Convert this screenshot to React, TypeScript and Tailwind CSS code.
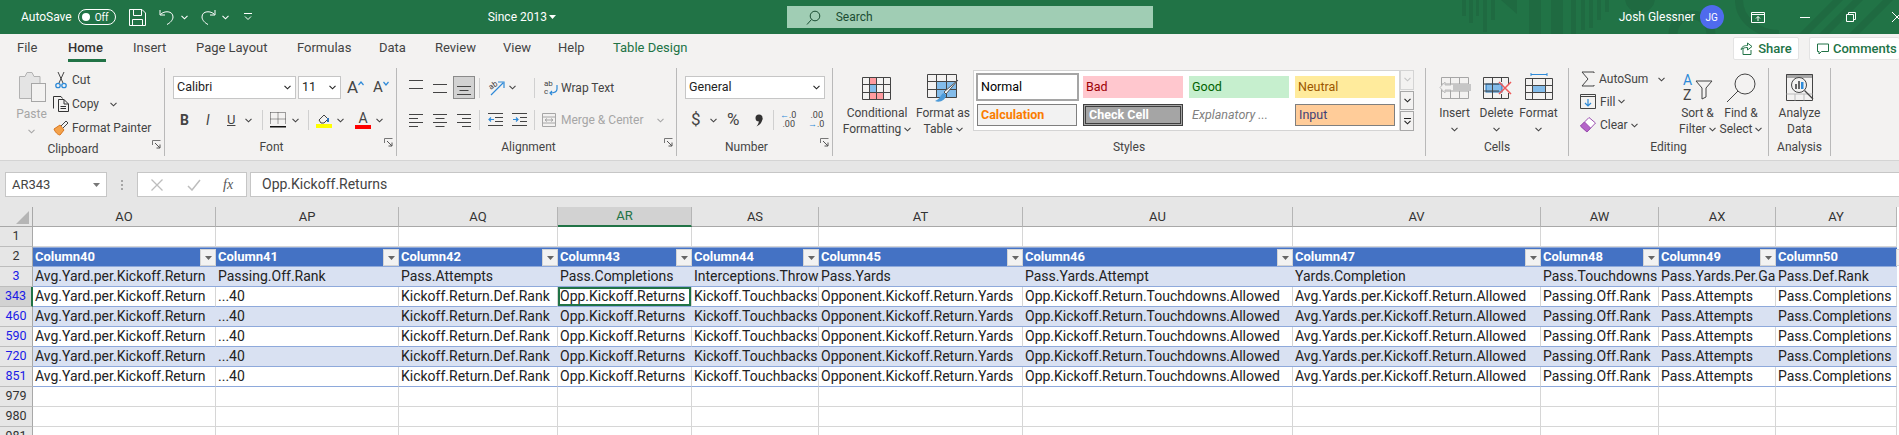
import type { ReactNode } from 'react';

const cols = [
  { id: 'AO', w: 183, head: 'Column40', first: 'Avg.Yard.per.Kickoff.Return', cell: 'Avg.Yard.per.Kickoff.Return' },
  { id: 'AP', w: 183, head: 'Column41', first: 'Passing.Off.Rank', cell: '...40' },
  { id: 'AQ', w: 159, head: 'Column42', first: 'Pass.Attempts', cell: 'Kickoff.Return.Def.Rank' },
  { id: 'AR', w: 134, head: 'Column43', first: 'Pass.Completions', cell: 'Opp.Kickoff.Returns' },
  { id: 'AS', w: 127, head: 'Column44', first: 'Interceptions.Thrown', cell: 'Kickoff.Touchbacks' },
  { id: 'AT', w: 204, head: 'Column45', first: 'Pass.Yards', cell: 'Opponent.Kickoff.Return.Yards' },
  { id: 'AU', w: 270, head: 'Column46', first: 'Pass.Yards.Attempt', cell: 'Opp.Kickoff.Return.Touchdowns.Allowed' },
  { id: 'AV', w: 248, head: 'Column47', first: 'Yards.Completion', cell: 'Avg.Yards.per.Kickoff.Return.Allowed' },
  { id: 'AW', w: 118, head: 'Column48', first: 'Pass.Touchdowns', cell: 'Passing.Off.Rank' },
  { id: 'AX', w: 117, head: 'Column49', first: 'Pass.Yards.Per.Game', cell: 'Pass.Attempts' },
  { id: 'AY', w: 121, head: 'Column50', first: 'Pass.Def.Rank', cell: 'Pass.Completions' },
];

const tabs = [
  { name: 'File', w: 51 },
  { name: 'Home', w: 65 },
  { name: 'Insert', w: 63 },
  { name: 'Page Layout', w: 101 },
  { name: 'Formulas', w: 82 },
  { name: 'Data', w: 56 },
  { name: 'Review', w: 68 },
  { name: 'View', w: 55 },
  { name: 'Help', w: 55 },
  { name: 'Table Design', w: 90 },
];

function Chev({ color = '#444' }: { color?: string }) {
  return (
    <svg width="7" height="5" viewBox="0 0 7 5" className="shrink-0">
      <path d="M0.5 0.8 L3.5 3.8 L6.5 0.8" fill="none" stroke={color} strokeWidth="1.1" />
    </svg>
  );
}

function Launcher() {
  return (
    <svg width="9" height="9" viewBox="0 0 9 9" className="shrink-0">
      <path d="M0.5 5V0.5H8.5" fill="none" stroke="#777" />
      <path d="M3 3L8 8M8 4.5V8H4.5" fill="none" stroke="#555" />
    </svg>
  );
}

function Lines({ widths, aligned, start = 2, step = 4 }: { widths: number[]; aligned: 'l' | 'c' | 'r'; start?: number; step?: number }) {
  return (
    <svg width="16" height="16" viewBox="0 0 16 16" className="shrink-0">
      {widths.map((w, i) => {
        const x = aligned === 'l' ? 1 : aligned === 'r' ? 15 - w : 8 - w / 2;
        return <rect key={i} x={x} y={start + i * step} width={w} height="1" fill="#444" />;
      })}
    </svg>
  );
}

function Group({ w, label, launcher, pr = 0, children }: { w: number; label: string; launcher?: boolean; pr?: number; children: ReactNode }) {
  return (
    <div className="shrink-0 h-[88px] flex flex-col border-r border-[#b9b9b9]" style={{ width: w }}>
      <div className="h-[80px] flex">{children}</div>
      <div className="flex-1 flex items-center relative text-[12px] text-[#444]" style={{ paddingRight: pr }}>
        <div className="flex-1 text-center">{label}</div>
        {launcher && (
          <div className="absolute right-[3px] top-0">
            <Launcher />
          </div>
        )}
      </div>
    </div>
  );
}

function BigButton({ w, ml = 0, lines, icon, chevLine = true }: { w: number; ml?: number; lines: string[]; icon: ReactNode; chevLine?: boolean }) {
  return (
    <div className="flex flex-col items-center shrink-0 text-[12px] text-[#444]" style={{ width: w, marginLeft: ml }}>
      <div className="h-[35px] flex items-center justify-center mt-[2px]">{icon}</div>
      <div className="leading-[16px] whitespace-nowrap">{lines[0]}</div>
      <div className="leading-[16px] flex items-center gap-[3px] whitespace-nowrap h-[16px]">
        {lines[1]}
        {chevLine && <Chev />}
      </div>
    </div>
  );
}

function GridIcon({ children }: { children?: ReactNode }) {
  return (
    <svg width="38" height="28" viewBox="0 0 38 28">
      {children}
      <path d="M4.5 3.5H32.5V25.5H4.5Z M4.5 10.5H32.5 M4.5 18.5H32.5 M11.5 3.5V25.5 M18.5 3.5V25.5 M25.5 3.5V25.5" fill="none" stroke="#444" />
    </svg>
  );
}

function SelectBox({ w, text, ml = 0 }: { w: number; text: string; ml?: number }) {
  return (
    <div className="h-[23px] bg-white border border-[#c6c6c6] flex items-center justify-between pl-[3px] pr-[4px] text-[12.5px] text-[#222] shrink-0" style={{ width: w, marginLeft: ml }}>
      <span>{text}</span>
      <Chev color="#222" />
    </div>
  );
}

function StyleCell({ text, className }: { text: string; className: string }) {
  return <div className={`h-[22px] w-[100px] flex items-center px-[3px] text-[12.5px] whitespace-nowrap shrink-0 ${className}`}>{text}</div>;
}

function TitleBar() {
  return (
    <div className="relative isolate h-[34px] bg-[#217346] flex items-center text-white text-[12px] overflow-hidden [&>*]:shrink-0">
      <svg width="460" height="34" viewBox="0 0 460 34" className="absolute right-0 top-0 -z-10">
        <g fill="#1f6a41">
          <rect x="23" y="0" width="4" height="16" />
          <rect x="30" y="0" width="4" height="23" />
          <rect x="37" y="0" width="3" height="16" />
          <rect x="44" y="0" width="4" height="32" />
          <rect x="52" y="0" width="4" height="20" />
          <path d="M62 0H78V14Z" />
          <rect x="90" y="0" width="12" height="34" />
          <rect x="112" y="0" width="12" height="34" />
          <rect x="132" y="0" width="5" height="34" />
          <rect x="142" y="0" width="4" height="30" />
          <rect x="150" y="0" width="4" height="28" />
          <rect x="158" y="0" width="4" height="20" />
          <rect x="166" y="0" width="4" height="12" />
          <circle cx="201" cy="-2" r="15" />
          <path d="M360 34L394 0H404L370 34Z M380 34L414 0H424L390 34Z M410 34L444 0H454L420 34Z" />
        </g>
        <circle cx="253" cy="34" r="19" fill="none" stroke="#1f6a41" strokeWidth="9" />
        <path d="M300 0C300 20 320 34 340 34" fill="none" stroke="#1f6a41" strokeWidth="8" />
      </svg>
      <span className="ml-[21px]">AutoSave</span>
      <div className="ml-[6px] w-[38px] h-[16px] rounded-full border border-white flex items-center pl-[3px] gap-[5px] text-[10px]">
        <span className="w-[8px] h-[8px] rounded-full bg-white" />
        Off
      </div>
      <svg width="17" height="17" viewBox="0 0 17 17" className="ml-[13px]">
        <path d="M0.5 0.5H13L16.5 4V16.5H0.5Z M4.5 0.5V6.5H12.5V0.5 M3.5 16.5V10.5H13.5V16.5" fill="none" stroke="#fff" />
      </svg>
      <svg width="16" height="16" viewBox="0 0 16 16" className="ml-[13px]">
        <path d="M1 1V6H6 M1.5 5.5C5 1.5 14 1.5 14 8C14 11 11 14 8 15.5" fill="none" stroke="#fff" />
      </svg>
      <div className="ml-[6px]"><Chev color="#fff" /></div>
      <svg width="16" height="16" viewBox="0 0 16 16" className="ml-[12px]">
        <path d="M15 1V6H10 M14.5 5.5C11 1.5 2 1.5 2 8C2 11 5 14 8 15.5" fill="none" stroke="#fff" />
      </svg>
      <div className="ml-[6px]"><Chev color="#fff" /></div>
      <svg width="8" height="8" viewBox="0 0 8 8" className="ml-[15px]">
        <path d="M0 0.5H8 M1 3.5L4 6.5L7 3.5" fill="none" stroke="#fff" />
      </svg>
      <span className="ml-[236px] w-[55px] whitespace-nowrap">Since 2013</span>
      <svg width="7" height="4" viewBox="0 0 7 4" className="ml-[6px]">
        <path d="M0 0H7L3.5 4Z" fill="#fff" />
      </svg>
      <div className="ml-[231px] w-[366px] h-[22px] bg-[#a0cdb4] flex items-center text-[#1b4d33]">
        <svg width="15" height="15" viewBox="0 0 15 15" className="ml-[19px]">
          <circle cx="9" cy="6" r="4.8" fill="none" stroke="#1b4d33" />
          <path d="M5.5 9.5L1 14.5" stroke="#1b4d33" />
        </svg>
        <span className="ml-[15px]">Search</span>
      </div>
      <span className="ml-[466px] w-[72px] whitespace-nowrap">Josh Glessner</span>
      <div className="ml-[9px] w-[24px] h-[24px] rounded-full bg-[#4f6bed] flex items-center justify-center text-[10px]">JG</div>
      <svg width="14" height="11" viewBox="0 0 14 11" className="ml-[27px]">
        <path d="M0.5 0.5H13.5V10.5H0.5Z M0.5 2.5H13.5 M7 9V4.5 M5 6.5L7 4.5L9 6.5" fill="none" stroke="#fff" />
      </svg>
      <div className="ml-[35px] w-[10px] h-px bg-white" />
      <svg width="10" height="10" viewBox="0 0 10 10" className="ml-[36px]">
        <path d="M0.5 2.5H7.5V9.5H0.5Z M2.5 2.5V0.5H9.5V7.5H7.5" fill="none" stroke="#fff" />
      </svg>
      <svg width="10" height="10" viewBox="0 0 10 10" className="ml-[36px]">
        <path d="M0 0L10 10M10 0L0 10" stroke="#fff" />
      </svg>
    </div>
  );
}

function TabRow() {
  return (
    <div className="h-[28px] flex items-center pl-[17px] text-[13px] text-[#444] relative">
      {tabs.map((t) => (
        <div
          key={t.name}
          className={`shrink-0 h-[28px] flex items-center whitespace-nowrap relative ${t.name === 'Table Design' ? 'text-[#217346]' : ''} ${t.name === 'Home' ? 'font-medium text-[#333]' : ''}`}
          style={{ width: t.w }}
        >
          {t.name}
          {t.name === 'Home' && <div className="absolute left-0 bottom-0 w-[38px] h-[3px] bg-[#217346]" />}
        </div>
      ))}
      <div className="ml-auto flex gap-[10px] text-[#217346] text-[13px] font-medium mt-[1px]">
        <div className="w-[66px] h-[23px] bg-white border border-[#e3e3e3] rounded-[2px] flex items-center justify-center gap-[5px]">
          <svg width="13" height="13" viewBox="0 0 13 13">
            <path d="M3 6V12.5H11V8 M1 7.5C2 4 5 3.5 7.5 3.5V1L12 4.5L7.5 8V5.5C5 5.5 3 6 1 7.5Z" fill="none" stroke="#217346" />
          </svg>
          Share
        </div>
        <div className="w-[90px] h-[23px] bg-white border border-[#e3e3e3] border-r-0 rounded-[2px] flex items-center pl-[7px] gap-[4px] overflow-hidden">
          <svg width="12" height="12" viewBox="0 0 12 12" className="shrink-0">
            <path d="M0.5 1H11.5V8.5H4.5L2 11V8.5H0.5Z" fill="none" stroke="#217346" />
          </svg>
          Comments
        </div>
      </div>
    </div>
  );
}

function Ribbon() {
  return (
    <div className="h-[99px] bg-[#f3f2f1] border-b border-[#d4d4d4] pt-[6px] flex">
      {/* Clipboard */}
      <Group w={165} label="Clipboard" launcher pr={18}>
        <div className="ml-[17px] w-[29px] flex flex-col items-center text-[12px] text-[#a6a6a6]">
          <svg width="28" height="31" viewBox="0 0 28 31" className="mt-[3px]">
            <path d="M1.5 5.5H7L9 1.5H14L16 5.5H22V27.5H1.5Z" fill="#e4e4e4" stroke="#b2b2b2" />
            <rect x="13.5" y="12.5" width="14" height="18" fill="#f3f2f1" stroke="#a6a6a6" />
          </svg>
          <span className="mt-[3px]">Paste</span>
          <div className="mt-[6px]"><Chev color="#a6a6a6" /></div>
        </div>
        <div className="ml-[7px] flex flex-col text-[12px] text-[#444]">
          <div className="h-[24px] flex items-center gap-[3px]">
            <svg width="16" height="18" viewBox="0 0 16 18">
              <path d="M5 1L10 12M11 1L6 12" stroke="#444" fill="none" />
              <circle cx="5" cy="14.5" r="2.2" fill="none" stroke="#2e8ad8" strokeWidth="1.3" />
              <circle cx="11" cy="14.5" r="2.2" fill="none" stroke="#2e8ad8" strokeWidth="1.3" />
            </svg>
            Cut
          </div>
          <div className="h-[24px] flex items-center gap-[3px]">
            <svg width="16" height="16" viewBox="0 0 16 16">
              <path d="M0.5 12.5V0.5H8L9.5 2.5 M5.5 3.5H11L15.5 8V15.5H5.5Z M11 3.5V8H15.5 M7.5 10.5H13 M7.5 12.5H13" fill="none" stroke="#333" />
            </svg>
            <span>Copy</span>
            <div className="ml-[8px]"><Chev /></div>
          </div>
          <div className="h-[24px] flex items-center gap-[3px] whitespace-nowrap">
            <svg width="16" height="16" viewBox="0 0 16 16">
              <path d="M1 9L7 5L11 10L7 15C5 15 2 12 1 9Z" fill="#f4a24b" stroke="#d9761d" />
              <path d="M8 6L13 1L15 3L10 8" fill="none" stroke="#444" />
            </svg>
            Format Painter
          </div>
        </div>
      </Group>
      {/* Font */}
      <Group w={232} label="Font" launcher pr={18}>
        <div className="pl-[8px] flex flex-col">
          <div className="mt-[8px] flex items-center">
            <SelectBox w={123} text="Calibri" />
            <SelectBox w={43} ml={2} text="11" />
            <span className="ml-[6px] text-[17px] leading-none text-[#444]">A</span>
            <svg width="6" height="5" viewBox="0 0 6 5" className="mb-[8px]">
              <path d="M0.5 4L3 1L5.5 4" fill="none" stroke="#2e8ad8" strokeWidth="1.2" />
            </svg>
            <span className="ml-[9px] text-[15px] leading-none text-[#444]">A</span>
            <svg width="6" height="5" viewBox="0 0 6 5" className="mb-[8px]">
              <path d="M0.5 1L3 4L5.5 1" fill="none" stroke="#2e8ad8" strokeWidth="1.2" />
            </svg>
          </div>
          <div className="mt-[9px] h-[24px] flex items-center text-[#444]">
            <span className="ml-[7px] w-[26px] font-bold text-[14px]">B</span>
            <span className="w-[21px] italic text-[14px]">I</span>
            <span className="w-[18px] underline text-[13px]">U</span>
            <Chev />
            <div className="ml-[10px] w-px h-[20px] bg-[#d0d0d0]" />
            <svg width="16" height="16" viewBox="0 0 16 16" className="ml-[7px]">
              <path d="M0.5 0.5H15.5V12 M0.5 0.5V12 M8 0.5V12 M0.5 7H15.5" fill="none" stroke="#444" strokeDasharray="1 1" />
              <rect x="0" y="14" width="16" height="1.5" fill="#111" />
            </svg>
            <div className="ml-[6px]"><Chev /></div>
            <div className="ml-[9px] w-px h-[20px] bg-[#d0d0d0]" />
            <svg width="16" height="16" viewBox="0 0 16 16" className="ml-[7px]">
              <path d="M3 8L8 3L12 7L8 11H5Z" fill="none" stroke="#444" />
              <path d="M12 6V10" stroke="#2e72b8" strokeWidth="2" />
              <rect x="0" y="12" width="16" height="4" fill="#ffff00" />
            </svg>
            <div className="ml-[5px]"><Chev /></div>
            <div className="ml-[11px] w-[16px] h-[18px] flex flex-col items-center text-[14px] leading-[14px] text-[#444]">
              A
              <div className="w-[16px] h-[4px] bg-[#ff0000]" />
            </div>
            <div className="ml-[5px]"><Chev /></div>
          </div>
        </div>
      </Group>
      {/* Alignment */}
      <Group w={280} label="Alignment" launcher pr={16}>
        <div className="pl-[11px] flex flex-col">
          <div className="mt-[8px] flex items-center h-[23px]">
            <div className="w-[24px] h-[16px]"><Lines widths={[14, 14]} aligned="c" start={0} step={8} /></div>
            <div className="w-[21px] h-[16px]"><Lines widths={[14, 14]} aligned="c" start={4} step={8} /></div>
            <div className="w-[22px] h-[23px] bg-[#d2d2d2] border border-[#8a8a8a] flex items-center justify-center">
              <Lines widths={[14, 9, 14]} aligned="c" start={6} step={4} />
            </div>
            <div className="ml-[4px] w-px h-[20px] bg-[#d0d0d0]" />
            <svg width="18" height="16" viewBox="0 0 18 16" className="ml-[8px]">
              <text x="1" y="8" fontSize="8" fill="#444" fontFamily="Roboto" transform="rotate(-35 5 6)">ab</text>
              <path d="M3 15L15 3M10 2H16V8" fill="none" stroke="#2e8ad8" strokeWidth="1.2" />
            </svg>
            <div className="ml-[3px]"><Chev /></div>
            <div className="ml-[18px] w-px h-[20px] bg-[#d0d0d0] -mr-px" />
            <div className="ml-[9px] flex items-center gap-[2px] text-[12px] text-[#444]">
              <svg width="16" height="17" viewBox="0 0 16 17">
                <text x="1" y="7" fontSize="8" fill="#444" fontFamily="Roboto">ab</text>
                <text x="1" y="15" fontSize="8" fill="#444" fontFamily="Roboto">c</text>
                <path d="M14 6V10C14 13 11 14 7 14M9 12L7 14L9 16" fill="none" stroke="#2e8ad8" strokeWidth="1.2" />
              </svg>
              <span className="whitespace-nowrap">Wrap Text</span>
            </div>
          </div>
          <div className="mt-[9px] h-[24px] flex items-center">
            <div className="w-[24px] h-[16px]"><Lines widths={[14, 9, 14, 9]} aligned="l" /></div>
            <div className="w-[24px] h-[16px]"><Lines widths={[14, 9, 14, 9]} aligned="c" /></div>
            <div className="w-[16px] h-[16px]"><Lines widths={[14, 9, 14, 9]} aligned="r" /></div>
            <div className="ml-[7px] w-px h-[20px] bg-[#d0d0d0]" />
            <svg width="15" height="14" viewBox="0 0 15 14" className="ml-[8px]">
              <path d="M0 0.5H15 M7 4.5H15 M7 8.5H15 M0 12.5H15" stroke="#444" />
              <path d="M6 6.5H1M3 4.5L1 6.5L3 8.5" fill="none" stroke="#2e8ad8" strokeWidth="1.2" />
            </svg>
            <svg width="15" height="14" viewBox="0 0 15 14" className="ml-[9px]">
              <path d="M0 0.5H15 M8 4.5H15 M8 8.5H15 M0 12.5H15" stroke="#444" />
              <path d="M1 6.5H6M4 4.5L6 6.5L4 8.5" fill="none" stroke="#2e8ad8" strokeWidth="1.2" />
            </svg>
            <div className="ml-[7px] w-px h-[20px] bg-[#d0d0d0]" />
            <div className="ml-[7px] flex items-center gap-[5px] text-[12px] text-[#a6a6a6] whitespace-nowrap">
              <svg width="14" height="14" viewBox="0 0 14 14">
                <path d="M0.5 0.5H13.5V13.5H0.5Z M0.5 4H13.5 M0.5 10H13.5 M3 7H11M5 5.5L3 7L5 8.5M9 5.5L11 7L9 8.5" fill="none" stroke="#a6a6a6" />
              </svg>
              Merge &amp; Center
              <div className="ml-[9px]"><Chev color="#a6a6a6" /></div>
            </div>
          </div>
        </div>
      </Group>
      {/* Number */}
      <Group w={156} label="Number" launcher pr={16}>
        <div className="pl-[8px] flex flex-col">
          <div className="mt-[8px]"><SelectBox w={140} text="General" /></div>
          <div className="mt-[9px] h-[24px] flex items-center text-[#444]">
            <span className="ml-[6px] w-[14px] text-[17px]">$</span>
            <div className="ml-[5px]"><Chev /></div>
            <span className="ml-[10px] w-[20px] text-[17px]">%</span>
            <svg width="8" height="13" viewBox="0 0 8 13" className="ml-[8px] mr-[2px]">
              <circle cx="4" cy="4" r="3.5" fill="#333" />
              <path d="M7.5 4C7.5 8 5 11 1.5 12.5C3.5 10 4 8 4 6Z" fill="#333" />
            </svg>
            <div className="ml-[8px] w-px h-[20px] bg-[#d0d0d0]" />
            <div className="ml-[6px] w-[15px] text-[9px] leading-[9px] text-right">
              <span className="text-[#2e8ad8]">←</span>.0<br />.00
            </div>
            <div className="ml-[13px] w-[15px] text-[9px] leading-[9px] text-right">
              .00<br /><span className="text-[#2e8ad8]">→</span>.0
            </div>
          </div>
        </div>
      </Group>
      {/* Styles */}
      <Group w={593} label="Styles">
        <BigButton
          w={70}
          ml={9}
          lines={['Conditional', 'Formatting']}
          icon={
            <GridIcon>
              <path d="M11.5 3.5H18.5V10.5H11.5Z M11.5 18.5H25.5V25.5H11.5Z" fill="#ff9b9f" stroke="#d92b2b" />
              <rect x="11.5" y="10.5" width="7" height="8" fill="#83bcea" />
            </GridIcon>
          }
        />
        <BigButton
          w={54}
          ml={4}
          lines={['Format as', 'Table']}
          icon={
            <svg width="34" height="30" viewBox="0 0 34 30">
              <rect x="11" y="9" width="20" height="16" fill="#83bcea" />
              <path d="M1.5 1.5H30.5V24.5H1.5Z M1.5 8.5H30.5 M1.5 16.5H30.5 M10.5 1.5V24.5 M20.5 1.5V24.5" fill="none" stroke="#444" />
              <path d="M32 7L20 21L18 19Z" fill="#fff" stroke="#555" />
              <path d="M18 20C14 21 15 26 9 28C14 30 20 27 20 22Z" fill="#4c9ad8" />
            </svg>
          }
        />
        <div className="ml-[3px] mt-[2px] w-[427px] h-[61px] bg-white border border-[#d4d4d4] p-[2px] pr-0 flex flex-col gap-[3px]">
          <div className="flex items-start gap-[4px]">
            <div className="w-[103px] h-[28px] border-2 border-[#a5a5a5] bg-white flex items-center pl-[3px] text-[12.5px] text-black shrink-0">Normal</div>
            <div className="flex gap-[6px] mt-[3px]">
              <StyleCell text="Bad" className="bg-[#ffc7ce] text-[#9c0006]" />
              <StyleCell text="Good" className="bg-[#c6efce] text-[#006100]" />
              <StyleCell text="Neutral" className="bg-[#ffeb9c] text-[#9c5700]" />
            </div>
          </div>
          <div className="flex gap-[6px] ml-[1px]">
            <StyleCell text="Calculation" className="bg-[#f2f2f2] border border-[#7f7f7f] text-[#fa7d00] font-bold" />
            <StyleCell text="Check Cell" className="bg-[#a5a5a5] border-[3px] border-double border-[#3f3f3f] text-white font-bold" />
            <StyleCell text="Explanatory ..." className="italic text-[#7f7f7f]" />
            <StyleCell text="Input" className="bg-[#ffcc99] border border-[#7f7f7f] text-[#3f3f76]" />
          </div>
        </div>
        <div className="mt-[2px] w-[14px] h-[61px] flex flex-col gap-px">
          <div className="flex-1 border border-[#d4d4d4] bg-[#f3f2f1] flex items-center justify-center"><Chev color="#c4c4c4" /></div>
          <div className="flex-1 border border-[#a8a8a8] bg-[#f3f2f1] flex items-center justify-center"><Chev color="#222" /></div>
          <div className="flex-1 border border-[#a8a8a8] bg-[#f3f2f1] flex flex-col items-center justify-center gap-px">
            <div className="w-[7px] h-px bg-[#222]" />
            <Chev color="#222" />
          </div>
        </div>
      </Group>
      {/* Cells */}
      <Group w={143} label="Cells">
        <div className="ml-[7px] flex">
          <BigButton
            w={43}
            lines={['Insert', '']}
            icon={
              <svg width="32" height="24" viewBox="0 0 32 24">
                <path d="M2.5 1.5H29.5V22.5H2.5Z M2.5 8H29.5 M2.5 15H29.5 M11.5 1.5V22.5 M20.5 1.5V22.5" fill="none" stroke="#a6a6a6" />
                <rect x="14" y="8" width="18" height="7" fill="#c6c6c6" />
                <path d="M12 9H6V6L1 11.5L6 17V14H12" fill="#f3f2f1" stroke="#bdbdbd" />
              </svg>
            }
          />
          <BigButton
            w={41}
            lines={['Delete', '']}
            icon={
              <svg width="32" height="24" viewBox="0 0 32 24">
                <rect x="5" y="8" width="16" height="8" fill="#83bcea" stroke="#1c6eb4" />
                <path d="M2.5 1.5H27.5V8 M2.5 1.5V22.5H27.5V17 M2.5 8H18 M2.5 15H18 M11.5 1.5V22.5 M20.5 1.5V6 M20.5 18V22.5" fill="none" stroke="#444" />
                <path d="M18 6L30 18M30 6L18 18" stroke="#ee5a5a" strokeWidth="1.5" />
              </svg>
            }
          />
          <BigButton
            w={43}
            lines={['Format', '']}
            icon={
              <svg width="30" height="29" viewBox="0 0 30 29">
                <path d="M7 1.5H23 M7 0V3 M23 0V3" stroke="#2e8ad8" />
                <rect x="8.5" y="12.5" width="13" height="7" fill="#83bcea" stroke="#1c6eb4" />
                <path d="M1.5 5.5H28.5V26.5H1.5Z M1.5 12.5H28.5 M1.5 19.5H28.5 M8.5 5.5V26.5 M21.5 5.5V26.5" fill="none" stroke="#444" />
              </svg>
            }
          />
        </div>
      </Group>
      {/* Editing */}
      <Group w={200} label="Editing">
        <div className="ml-[11px] w-[96px] flex flex-col text-[12px] text-[#444]">
          <div className="h-[22px] flex items-center">
            <svg width="16" height="16" viewBox="0 0 16 16">
              <path d="M14 2V1H2L8 8L2 15H14V14" fill="none" stroke="#444" />
            </svg>
            <span className="ml-[3px]">AutoSum</span>
            <div className="ml-[10px]"><Chev /></div>
          </div>
          <div className="h-[23px] flex items-center">
            <svg width="16" height="15" viewBox="0 0 16 15">
              <path d="M0.5 0.5H15.5V14.5H0.5Z M0.5 2.5H15.5" fill="none" stroke="#444" />
              <path d="M8 5V12M5 9L8 12L11 9" fill="none" stroke="#2e8ad8" strokeWidth="1.2" />
            </svg>
            <span className="ml-[4px]">Fill</span>
            <div className="ml-[3px]"><Chev /></div>
          </div>
          <div className="h-[24px] flex items-center">
            <svg width="16" height="16" viewBox="0 0 16 16">
              <path d="M0.5 9L9 0.5L15.5 6L7 15Z" fill="#fff" stroke="#9b4fb0" />
              <path d="M0.5 9L4.5 5L10.5 11L7 15Z" fill="#b565c9" stroke="#9b4fb0" />
            </svg>
            <span className="ml-[4px]">Clear</span>
            <div className="ml-[3px]"><Chev /></div>
          </div>
        </div>
        <BigButton
          w={43}
          lines={['Sort &', 'Filter']}
          icon={
            <svg width="30" height="28" viewBox="0 0 30 28" className="-mt-[2px]">
              <text x="0" y="12" fontSize="14" fill="#2e8ad8" fontFamily="Roboto">A</text>
              <text x="0" y="27" fontSize="14" fill="#444" fontFamily="Roboto">Z</text>
              <path d="M13 8H29L23 15V24L19 26V15Z" fill="none" stroke="#444" />
            </svg>
          }
        />
        <BigButton
          w={44}
          lines={['Find &', 'Select']}
          icon={
            <svg width="30" height="30" viewBox="0 0 30 30">
              <circle cx="19" cy="11" r="10" fill="none" stroke="#444" />
              <path d="M12 18L1 29" stroke="#444" />
            </svg>
          }
        />
      </Group>
      {/* Analysis */}
      <Group w={62} label="Analysis">
        <BigButton
          w={61}
          lines={['Analyze', 'Data']}
          chevLine={false}
          icon={
            <svg width="30" height="30" viewBox="0 0 30 30">
              <rect x="1" y="1" width="27" height="4" fill="#a6a6a6" />
              <path d="M1.5 1.5H27.5V27.5H1.5Z" fill="none" stroke="#444" />
              <path d="M1.5 21H27.5 M10 21V27.5 M19 21V27.5" stroke="#bbb" />
              <circle cx="14" cy="12" r="7.5" fill="#f3f2f1" stroke="#444" />
              <rect x="10" y="11" width="2" height="5" fill="#666" />
              <rect x="13" y="8" width="2" height="8" fill="#666" />
              <rect x="16" y="9" width="2.5" height="7" fill="#2e8ad8" />
              <path d="M19.5 17.5L28 26" stroke="#444" strokeWidth="1.3" />
            </svg>
          }
        />
      </Group>
    </div>
  );
}

function FormulaBar() {
  return (
    <div className="h-[46px] bg-[#e6e6e6] pt-[11px] flex items-start text-[14px] text-[#444]">
      <div className="ml-[5px] w-[102px] h-[25px] bg-white border border-[#c6c6c6] flex items-center justify-between pl-[6px] pr-[6px] text-[13px]">
        AR343
        <svg width="7" height="4" viewBox="0 0 7 4"><path d="M0 0H7L3.5 4Z" fill="#777" /></svg>
      </div>
      <div className="ml-[14px] w-[3px] h-[25px] flex flex-col justify-center gap-[2px]">
        <div className="w-[2px] h-[2px] bg-[#a6a6a6]" />
        <div className="w-[2px] h-[2px] bg-[#a6a6a6]" />
        <div className="w-[2px] h-[2px] bg-[#a6a6a6]" />
      </div>
      <div className="ml-[13px] w-[110px] h-[25px] bg-white border border-[#c6c6c6] flex items-center">
        <svg width="12" height="12" viewBox="0 0 12 12" className="ml-[13px]"><path d="M0.5 0.5L11.5 11.5M11.5 0.5L0.5 11.5" stroke="#bdbdbd" strokeWidth="1.3" /></svg>
        <svg width="14" height="12" viewBox="0 0 14 12" className="ml-[24px]"><path d="M1 7L5 11L13 1" fill="none" stroke="#bdbdbd" strokeWidth="1.5" /></svg>
        <span className="ml-[22px] italic text-[#555] font-['Liberation_Serif',serif] text-[14px]">fx</span>
      </div>
      <div className="ml-[3px] flex-1 h-[25px] bg-white border border-[#c6c6c6] border-r-0 flex items-center pl-[11px]">Opp.Kickoff.Returns</div>
    </div>
  );
}

function RowHead({ label, filtered, selected }: { label: string; filtered?: boolean; selected?: boolean }) {
  return (
    <div
      className={`w-[33px] h-full shrink-0 flex items-center justify-center border-b border-[#bdbdbd] text-[12.5px] ${
        selected ? 'bg-[#d2d2d2] border-r-2 border-r-[#217346]' : 'bg-[#e6e6e6] border-r border-r-[#a8a8a8]'
      } ${filtered ? 'text-[#1a1ae6]' : 'text-[#333]'}`}
    >
      {label}
    </div>
  );
}

function FilterButton({ last }: { last?: boolean }) {
  return (
    <div className={`absolute top-[1px] w-[16px] h-[17px] bg-[#f2f2f2] border border-[#d4d4d4] flex items-center justify-center ${last ? '-right-[15px]' : 'right-0'}`}>
      <svg width="7" height="4" viewBox="0 0 7 4"><path d="M0 0H7L3.5 4Z" fill="#666" /></svg>
    </div>
  );
}

function Sheet() {
  const blank = (label: string) => (
    <div key={label} className="flex h-[20px]">
      <RowHead label={label} />
      {cols.map((c) => (
        <div key={c.id} className="h-full border-r border-b border-[#d6d6d6] shrink-0" style={{ width: c.w }} />
      ))}
    </div>
  );

  return (
    <div className="bg-white text-[14px] text-[#222]">
      {/* column letters */}
      <div className="flex h-[20px] text-[13px]">
        <div className="w-[33px] shrink-0 bg-[#e6e6e6] border-r border-b border-[#a8a8a8] flex items-end justify-end pr-[3px] pb-[2px]">
          <svg width="13" height="13" viewBox="0 0 13 13"><path d="M13 0V13H0Z" fill="#b5b5b5" /></svg>
        </div>
        {cols.map((c) => (
          <div
            key={c.id}
            className={`shrink-0 h-full flex items-center justify-center border-r ${
              c.id === 'AR'
                ? 'bg-[#d2d2d2] border-b-2 border-b-[#217346] text-[#217346] border-r-[#b5b5b5]'
                : 'bg-[#e6e6e6] border-b border-b-[#a8a8a8] border-r-[#b5b5b5] text-[#333]'
            }`}
            style={{ width: c.w }}
          >
            {c.id}
          </div>
        ))}
      </div>
      {blank('1')}
      {/* table header */}
      <div className="flex h-[20px] text-[13px]">
        <RowHead label="2" />
        {cols.map((c, i) => (
          <div key={c.id} className="relative shrink-0 h-full bg-[#4472c4] border-y border-[#8ea9db] text-white font-bold flex items-center pl-[2px]" style={{ width: c.w }}>
            {c.head}
            <FilterButton last={i === cols.length - 1} />
          </div>
        ))}
      </div>
      <div className="flex h-[20px]">
        <RowHead label="3" filtered />
        {cols.map((c) => (
          <div key={c.id} className="shrink-0 h-full bg-[#d9e1f2] border-b border-[#8ea9db] flex items-center pl-[2px] overflow-hidden whitespace-nowrap" style={{ width: c.w }}>
            {c.first}
          </div>
        ))}
      </div>
      {['343', '460', '590', '720', '851'].map((r, i) => (
        <div key={r} className="flex h-[20px]">
          <RowHead label={r} filtered selected={r === '343'} />
          {cols.map((c) => (
            <div
              key={c.id}
              className={`relative shrink-0 h-full border-b border-[#8ea9db] flex items-center pl-[2px] overflow-hidden whitespace-nowrap ${
                i % 2 === 1 ? 'bg-[#d9e1f2]' : 'bg-white border-r border-r-[#d6d6d6]'
              }`}
              style={{ width: c.w }}
            >
              {c.cell}
              {r === '343' && c.id === 'AR' && <div className="absolute inset-0 border-2 border-[#217346]" />}
            </div>
          ))}
        </div>
      ))}
      {blank('979')}
      {blank('980')}
      {blank('981')}
    </div>
  );
}

export default function App() {
  return (
    <div className="w-[1899px] h-[435px] overflow-hidden bg-[#f3f2f1] font-['Roboto',sans-serif]">
      <TitleBar />
      <TabRow />
      <Ribbon />
      <FormulaBar />
      <Sheet />
    </div>
  );
}
